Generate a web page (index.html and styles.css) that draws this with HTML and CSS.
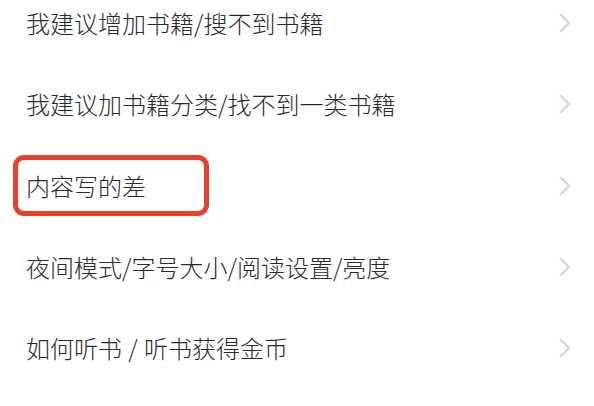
FILE: index.html
```html
<!DOCTYPE html>
<html lang="zh-CN">
<head>
<meta charset="utf-8">
<title>帮助</title>
<link rel="stylesheet" href="styles.css">
</head>
<body>
<ul class="list">
  <li class="row"><span class="label">我建议增加书籍/搜不到书籍</span><svg class="chev" viewBox="0 0 14 20" width="14" height="20"><polyline points="3,2 11,10 3,18"/></svg></li>
  <li class="row"><span class="label">我建议加书籍分类/找不到一类书籍</span><svg class="chev" viewBox="0 0 14 20" width="14" height="20"><polyline points="3,2 11,10 3,18"/></svg></li>
  <li class="row highlighted"><span class="label">内容写的差</span><span class="mark"></span><svg class="chev" viewBox="0 0 14 20" width="14" height="20"><polyline points="3,2 11,10 3,18"/></svg></li>
  <li class="row"><span class="label">夜间模式/字号大小/阅读设置/亮度</span><svg class="chev" viewBox="0 0 14 20" width="14" height="20"><polyline points="3,2 11,10 3,18"/></svg></li>
  <li class="row"><span class="label">如何听书 / 听书获得金币</span><svg class="chev" viewBox="0 0 14 20" width="14" height="20"><polyline points="3,2 11,10 3,18"/></svg></li>
</ul>
</body>
</html>
```
FILE: styles.css
```css
html, body {
  margin: 0;
  padding: 0;
  background: #ffffff;
  overflow: hidden;
}
body {
  width: 594px;
  height: 406px;
  font-family: "Noto Sans CJK SC", "Noto Sans", sans-serif;
  color: #2b2b2b;
}
.list {
  list-style: none;
  margin: -17.6px 0 0 0;
  padding: 0;
}
.row {
  position: relative;
  height: 81.25px;
  display: flex;
  align-items: center;
  justify-content: space-between;
  padding: 0 22px 0 26px;
  box-sizing: border-box;
}
.label {
  font-size: 24px;
  font-weight: 300;
  line-height: 1;
  white-space: nowrap;
  word-spacing: 1px;
}
.chev {
  flex: none;
  fill: none;
  stroke: #d6d6d6;
  stroke-width: 2.4;
  stroke-linecap: round;
  stroke-linejoin: round;
}
.mark {
  position: absolute;
  left: 13px;
  top: 10px;
  width: 196px;
  height: 61px;
  box-sizing: border-box;
  border: 5px solid #e8412b;
  border-radius: 11px;
}
```
